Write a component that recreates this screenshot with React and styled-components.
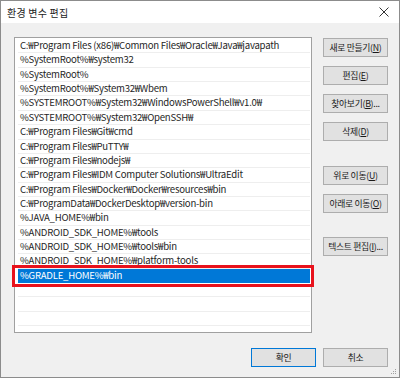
import React from "react";
import styled, { createGlobalStyle } from "styled-components";

const GlobalStyle = createGlobalStyle`
  html, body {
    margin: 0;
    padding: 0;
    background: #ffffff;
  }
  body {
    font-family: "Noto Sans CJK KR", "Noto Sans", sans-serif;
  }
`;

const Frame = styled.div`
  position: relative;
  box-sizing: border-box;
  width: 400px;
  height: 378px;
  border: 1px solid #8c8c8c;
  background: #f0f0f0;
  display: flex;
  flex-direction: column;
`;

const TitleBar = styled.div`
  height: 22px;
  background: #ffffff;
  display: flex;
  align-items: center;
  justify-content: space-between;
  padding: 0 8px 0 6px;
`;

const Title = styled.span`
  font-size: 10px;
  color: #222;
  letter-spacing: 0.2px;
`;

const CloseIcon = styled.svg`
  width: 10px;
  height: 10px;
  margin-right: 2px;
`;

const Body = styled.div`
  display: flex;
  flex-direction: column;
  padding: 14px 11px 0 13px;
`;

const Main = styled.div`
  display: flex;
  gap: 11px;
`;

const List = styled.div`
  box-sizing: border-box;
  width: 298px;
  height: 296px;
  border: 1px solid #a0a0a0;
  background: #ffffff;
  padding-top: 1px;
`;

const Row = styled.div`
  position: relative;
  box-sizing: border-box;
  height: 14.36px;
  margin: 0 1px 0 3px;
  padding-left: 2px;
  border-bottom: 1px solid ${p => (p.$selected ? "#0078d7" : "#eeeeee")};
  background: ${p => (p.$selected ? "#0078d7" : "transparent")};
  color: ${p => (p.$selected ? "#ffffff" : "#262626")};
  font-size: 9.6px;
  letter-spacing: -0.25px;
  line-height: 13.5px;
  white-space: nowrap;
`;

/* red annotation box drawn over the selected row */
const Mark = styled.span`
  position: absolute;
  left: -6px;
  right: -4px;
  top: -4px;
  bottom: -5px;
  border: 3px solid #e8121c;
  pointer-events: none;
`;

const Buttons = styled.div`
  display: flex;
  flex-direction: column;
  padding-top: 1px;
`;

const Button = styled.div`
  box-sizing: border-box;
  width: 65px;
  height: 19px;
  margin-top: ${p => p.$space || 0}px;
  border: 1px solid ${p => (p.$primary ? "#0078d7" : "#adadad")};
  background: #e1e1e1;
  color: #1a1a1a;
  font-size: 8.8px;
  letter-spacing: -0.3px;
  line-height: 17px;
  text-align: center;
  white-space: nowrap;
  overflow: hidden;
  u {
    text-decoration: underline;
  }
`;

const Footer = styled.div`
  display: flex;
  justify-content: flex-end;
  gap: 7px;
  margin-top: 15px;
`;

const Grip = styled.svg`
  position: absolute;
  right: 2px;
  bottom: 2px;
  width: 7px;
  height: 7px;
`;

const paths = [
  "C:₩Program Files (x86)₩Common Files₩Oracle₩Java₩javapath",
  "%SystemRoot%₩system32",
  "%SystemRoot%",
  "%SystemRoot%₩System32₩Wbem",
  "%SYSTEMROOT%₩System32₩WindowsPowerShell₩v1.0₩",
  "%SYSTEMROOT%₩System32₩OpenSSH₩",
  "C:₩Program Files₩Git₩cmd",
  "C:₩Program Files₩PuTTY₩",
  "C:₩Program Files₩nodejs₩",
  "C:₩Program Files₩IDM Computer Solutions₩UltraEdit",
  "C:₩Program Files₩Docker₩Docker₩resources₩bin",
  "C:₩ProgramData₩DockerDesktop₩version-bin",
  "%JAVA_HOME%₩bin",
  "%ANDROID_SDK_HOME%₩tools",
  "%ANDROID_SDK_HOME%₩tools₩bin",
  "%ANDROID_SDK_HOME%₩platform-tools",
  "%GRADLE_HOME%₩bin",
  "",
  "",
  "",
];

export default function App() {
  return (
    <>
      <GlobalStyle />
      <Frame>
        <TitleBar>
          <Title>환경 변수 편집</Title>
          <CloseIcon viewBox="0 0 10 10">
            <path d="M0.5 0.5 L9.5 9.5 M9.5 0.5 L0.5 9.5" stroke="#333" strokeWidth="1" fill="none" />
          </CloseIcon>
        </TitleBar>
        <Body>
          <Main>
            <List>
              {paths.map((p, i) => (
                <Row key={i} $selected={i === 16}>
                  {p}
                  {i === 16 && <Mark />}
                </Row>
              ))}
            </List>
            <Buttons>
              <Button>새로 만들기(<u>N</u>)</Button>
              <Button $space={9}>편집(<u>E</u>)</Button>
              <Button $space={9}>찾아보기(<u>B</u>)...</Button>
              <Button $space={9}>삭제(<u>D</u>)</Button>
              <Button $space={25}>위로 이동(<u>U</u>)</Button>
              <Button $space={9}>아래로 이동(<u>O</u>)</Button>
              <Button $space={24}>텍스트 편집(<u>I</u>)...</Button>
            </Buttons>
          </Main>
          <Footer>
            <Button $primary>확인</Button>
            <Button>취소</Button>
          </Footer>
        </Body>
        <Grip viewBox="0 0 7 7">
          <rect x="5" y="1" width="1" height="1" fill="#a0a0a0" />
          <rect x="3" y="3" width="1" height="1" fill="#a0a0a0" />
          <rect x="5" y="3" width="1" height="1" fill="#a0a0a0" />
          <rect x="1" y="5" width="1" height="1" fill="#a0a0a0" />
          <rect x="3" y="5" width="1" height="1" fill="#a0a0a0" />
          <rect x="5" y="5" width="1" height="1" fill="#a0a0a0" />
        </Grip>
      </Frame>
    </>
  );
}
